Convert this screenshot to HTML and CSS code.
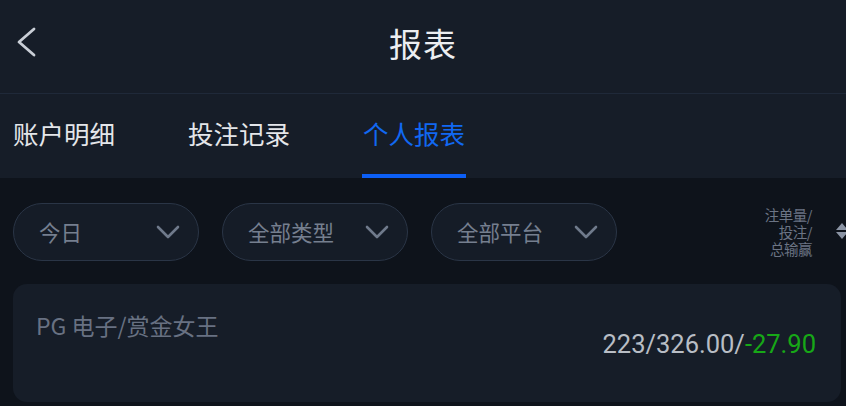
FILE: index.html
```html
<!DOCTYPE html>
<html lang="zh-CN">
<head>
    <meta charset="UTF-8">
    <meta name="viewport" content="width=device-width, initial-scale=1.0">
    <title>报表</title>
    <link rel="stylesheet" href="styles.css">
</head>
<body>
    <header class="topbar">
        <a class="back" href="#">
            <svg width="22" height="32" viewBox="0 0 22 32"><path d="M19 3 L4 16 L19 29" fill="none" stroke="#c9ced6" stroke-width="2.8" stroke-linecap="round" stroke-linejoin="round"/></svg>
        </a>
        <h1>报表</h1>
    </header>

    <nav class="tabs">
        <a href="#" class="tab">账户明细</a>
        <a href="#" class="tab">投注记录</a>
        <a href="#" class="tab active">个人报表</a>
    </nav>

    <div class="filters">
        <div class="select">
            <span>今日</span>
            <svg class="caret" width="24" height="15" viewBox="0 0 24 15"><path d="M2 2 L12 12 L22 2" fill="none" stroke="#6f7a8b" stroke-width="2.6" stroke-linecap="round" stroke-linejoin="round"/></svg>
        </div>
        <div class="select">
            <span>全部类型</span>
            <svg class="caret" width="24" height="15" viewBox="0 0 24 15"><path d="M2 2 L12 12 L22 2" fill="none" stroke="#6f7a8b" stroke-width="2.6" stroke-linecap="round" stroke-linejoin="round"/></svg>
        </div>
        <div class="select">
            <span>全部平台</span>
            <svg class="caret" width="24" height="15" viewBox="0 0 24 15"><path d="M2 2 L12 12 L22 2" fill="none" stroke="#6f7a8b" stroke-width="2.6" stroke-linecap="round" stroke-linejoin="round"/></svg>
        </div>
        <div class="sort">
            <div class="sort-label">
                <div>注单量/</div>
                <div>投注/</div>
                <div>总输赢</div>
            </div>
            <svg class="sort-icon" width="14" height="18" viewBox="0 0 14 18"><path d="M7 1 L13 8 L1 8 Z M1 10 L13 10 L7 17 Z" fill="#8b94a4"/></svg>
        </div>
    </div>

    <div class="card">
        <div class="card-title">PG 电子/赏金女王</div>
        <div class="card-value">223/326.00/<span class="loss">-27.90</span></div>
    </div>
</body>
</html>
```

FILE: styles.css
```css
body {
    margin: 0;
    background-color: #0e131b;
    font-family: "Noto Sans CJK SC", "Noto Sans", sans-serif;
    overflow: hidden;
}
.topbar {
    height: 94px;
    box-sizing: border-box;
    padding-bottom: 8px;
    background-color: #161d28;
    border-bottom: 1px solid #1f2939;
    display: flex;
    align-items: center;
    justify-content: center;
    position: relative;
}
.topbar h1 {
    margin: 0;
    font-size: 33px;
    font-weight: 400;
    color: #eceef1;
    letter-spacing: 1px;
}
.back {
    position: absolute;
    left: 15px;
    top: 26px;
}
.tabs {
    height: 84px;
    background-color: #161d28;
    display: flex;
    padding-left: 12px;
    gap: 71px;
}
.tab {
    font-size: 25.5px;
    color: #e4e6ea;
    text-decoration: none;
    line-height: 78px;
    height: 80px;
    border-bottom: 4px solid transparent;
    padding: 0 1px;
}
.tab.active {
    color: #1168f2;
    border-bottom-color: #0c5ff6;
}
.filters {
    display: flex;
    align-items: center;
    padding: 25px 0 0 13px;
    gap: 23px;
    height: 58px;
}
.select {
    width: 186px;
    height: 58px;
    box-sizing: border-box;
    border: 1.5px solid #2a3546;
    border-radius: 29px;
    background-color: #151c27;
    display: flex;
    align-items: center;
    justify-content: space-between;
    padding: 0 18px 2px 25px;
    font-size: 21.5px;
    color: #757f8f;
}
.caret {
    margin-top: 2px;
}
.sort {
    margin-left: auto;
    display: flex;
    align-items: center;
    gap: 23px;
    margin-right: -3px;
    margin-top: -2px;
}
.sort-label {
    font-size: 14.5px;
    line-height: 17px;
    color: #6b7484;
    text-align: right;
    letter-spacing: -0.5px;
}
.card {
    margin: 23px 5px 0 13px;
    height: 118px;
    border-radius: 14px;
    background-color: #161d28;
    box-sizing: border-box;
    padding: 24px 24px 0 23px;
    position: relative;
}
.card-title {
    font-size: 23px;
    color: #687182;
}
.card-value {
    position: absolute;
    right: 25px;
    top: 45px;
    font-family: Roboto, "Noto Sans", sans-serif;
    font-size: 25.5px;
    color: #b8bdc5;
}
.loss {
    color: #17a817;
}
```
